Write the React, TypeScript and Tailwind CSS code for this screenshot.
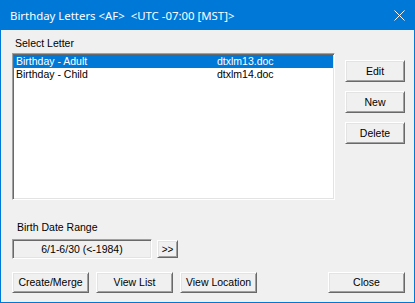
import React from "react";

const raised =
  "border border-t-white border-l-white border-r-[#696969] border-b-[#696969] bg-[#f0f0f0] shadow-[inset_1px_1px_0_#e3e3e3,inset_-1px_-1px_0_#a0a0a0] flex items-center justify-center text-black";
const sunken =
  "border border-t-[#a0a0a0] border-l-[#a0a0a0] border-r-white border-b-white shadow-[inset_1px_1px_0_#696969,inset_-1px_-1px_0_#e3e3e3]";

const letters = [
  { name: "Birthday - Adult", file: "dtxlm13.doc" },
  { name: "Birthday - Child", file: "dtxlm14.doc" },
];

function Btn({ label, className }: { label: string; className: string }) {
  return <button className={`${raised} ${className}`}>{label}</button>;
}

export default function App() {
  return (
    <div
      className="flex h-[303px] w-[415px] flex-col bg-[#0078d7] text-[10.5px] leading-[13px] text-black"
      style={{ fontFamily: '"Liberation Sans", Arial, sans-serif' }}
    >
      {/* title bar */}
      <div className="flex h-[30px] shrink-0 items-center justify-between pl-[10px] pr-[10px]">
        <span
          className="whitespace-pre text-[11.4px] text-white"
          style={{ fontFamily: '"Noto Sans", "Open Sans", sans-serif' }}
        >
          Birthday Letters &lt;AF&gt;  &lt;UTC -07:00 [MST]&gt;
        </span>
        <svg width="11" height="11" viewBox="0 0 11 11">
          <path d="M0.5 0.5 L10.5 10.5 M10.5 0.5 L0.5 10.5" stroke="white" strokeWidth="1" />
        </svg>
      </div>

      {/* client area */}
      <div className="mx-[1px] mb-[1px] flex flex-1 flex-col bg-[#f0f0f0] pl-[11px] pr-[9px] pt-[7px]">
        <div className="flex">
          <div className="flex w-[323px] flex-col">
            <div className="h-[13px] pl-[3px]">Select Letter</div>
            <div className={`${sunken} mt-[3px] h-[147px] bg-white p-[1px]`}>
              {letters.map((l, i) => (
                <div
                  key={l.file}
                  className={`flex h-[13px] items-center pl-[2px] ${
                    i === 0 ? "bg-[#0078d7] text-white" : ""
                  }`}
                >
                  <span className="w-[201px]">{l.name}</span>
                  <span>{l.file}</span>
                </div>
              ))}
            </div>
          </div>
          <div className="ml-[10px] flex flex-col gap-[9px] pt-[23px]">
            <Btn label="Edit" className="h-[22px] w-[60px]" />
            <Btn label="New" className="h-[22px] w-[60px]" />
            <Btn label="Delete" className="h-[22px] w-[60px]" />
          </div>
        </div>

        <div className="mt-[21px] h-[13px] pl-[5px]">Birth Date Range</div>
        <div className="mt-[5px] flex items-start">
          <div className={`${sunken} flex h-[20px] w-[140px] items-center justify-center`}>
            6/1-6/30 (&lt;-1984)
          </div>
          <Btn label=">>" className="ml-[5px] mt-[1px] h-[18px] w-[21px] text-[10px]" />
        </div>

        <div className="mt-[13px] flex">
          <Btn label="Create/Merge" className="h-[21px] w-[77px]" />
          <Btn label="View List" className="ml-[7px] h-[21px] w-[77px]" />
          <Btn label="View Location" className="ml-[7px] h-[21px] w-[77px]" />
          <Btn label="Close" className="ml-auto h-[21px] w-[77px]" />
        </div>
      </div>
    </div>
  );
}
